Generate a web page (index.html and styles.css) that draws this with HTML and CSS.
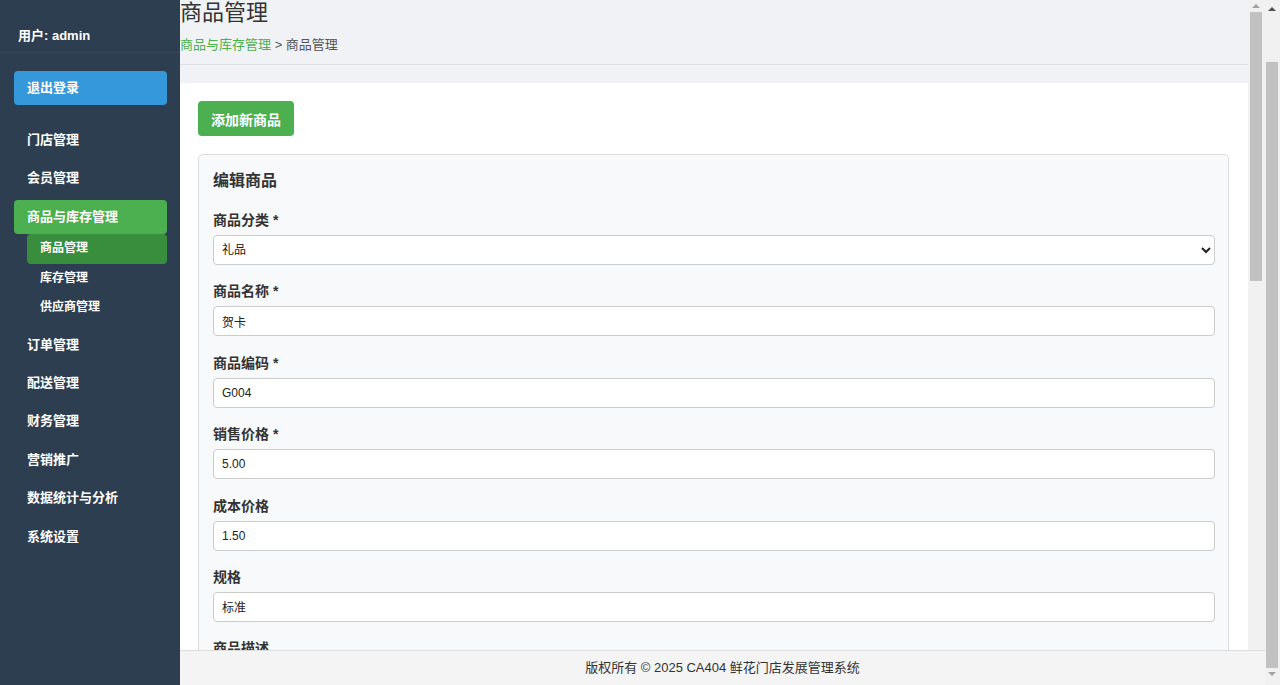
FILE: index.html
```html
<!DOCTYPE html>
<html lang="zh-CN">
<head>
    <meta charset="UTF-8">
    <meta name="viewport" content="width=device-width, initial-scale=1.0">
    <title>商品管理 - 鲜花门店发展管理系统</title>
    <link rel="stylesheet" href="styles.css">
</head>
<body>

    <div class="sidebar">
        <div class="userInfo">用户: admin</div>
        <a class="btnLogout" href="#">退出登录</a>
        <ul class="menu">
            <li><a href="#">门店管理</a></li>
            <li><a href="#">会员管理</a></li>
            <li>
                <a class="active" href="#">商品与库存管理</a>
                <ul class="subMenu">
                    <li><a class="active" href="#">商品管理</a></li>
                    <li><a href="#">库存管理</a></li>
                    <li><a href="#">供应商管理</a></li>
                </ul>
            </li>
            <li><a href="#">订单管理</a></li>
            <li><a href="#">配送管理</a></li>
            <li><a href="#">财务管理</a></li>
            <li><a href="#">营销推广</a></li>
            <li><a href="#">数据统计与分析</a></li>
            <li><a href="#">系统设置</a></li>
        </ul>
    </div>

    <div class="mainArea">
        <div class="contentRow">
            <div class="main">
                <div class="pageHeader">
                    <h1>商品管理</h1>
                    <div class="breadcrumb"><a href="#">商品与库存管理</a> &gt; 商品管理</div>
                </div>

                <div class="panel">
                    <button class="btnGreen">添加新商品</button>

                    <div class="formCard">
                        <h3>编辑商品</h3>
                        <div class="formGroup">
                            <label for="category">商品分类 *</label>
                            <select id="category">
                                <option>鲜花</option>
                                <option>绿植</option>
                                <option selected>礼品</option>
                                <option>包装材料</option>
                            </select>
                        </div>
                        <div class="formGroup">
                            <label for="name">商品名称 *</label>
                            <input type="text" id="name" value="贺卡">
                        </div>
                        <div class="formGroup">
                            <label for="code">商品编码 *</label>
                            <input type="text" id="code" value="G004">
                        </div>
                        <div class="formGroup">
                            <label for="price">销售价格 *</label>
                            <input type="text" id="price" value="5.00">
                        </div>
                        <div class="formGroup">
                            <label for="cost">成本价格</label>
                            <input type="text" id="cost" value="1.50">
                        </div>
                        <div class="formGroup">
                            <label for="spec">规格</label>
                            <input type="text" id="spec" value="标准">
                        </div>
                        <div class="formGroup">
                            <label for="desc">商品描述</label>
                            <textarea id="desc"></textarea>
                        </div>
                    </div>
                </div>
            </div>

            <!-- scrollbar of the content pane -->
            <div class="scrollInner" aria-hidden="true">
                <div class="arrowBox"><span class="arrowUp dim"></span></div>
                <div class="thumbInner"></div>
            </div>
        </div>

        <div class="footer">版权所有 © 2025 CA404 鲜花门店发展管理系统</div>
    </div>

    <!-- page scrollbar -->
    <div class="scrollOuter" aria-hidden="true">
        <div class="arrowBox tall"><span class="arrowUp"></span></div>
        <div class="thumbOuter"></div>
        <div class="arrowBox"><span class="arrowDown dim"></span></div>
    </div>

</body>
</html>
```

FILE: styles.css
```css
*{
    margin: 0px;
    padding: 0px;
    box-sizing: border-box;
}
body {
    font-family: "Liberation Sans", Arial, "Noto Sans CJK SC", sans-serif;
    color: #333;
    background-color: #f0f2f5;
    display: flex;
    height: 100vh;
    overflow: hidden;
}
a {
    text-decoration: none;
}
ul {
    list-style: none;
}
.sidebar {
    width: 180px;
    flex-shrink: 0;
    background-color: #2c3e50;
    color: #fff;
}
.userInfo {
    padding: 26px 18px 7px;
    font-size: 13px;
    font-weight: bold;
    line-height: 19px;
    border-bottom: 1px solid #34495e;
}
.btnLogout {
    display: block;
    margin: 18px 13px 0 14px;
    padding: 8px 13px;
    line-height: 18px;
    font-size: 13px;
    font-weight: bold;
    color: #fff;
    background-color: #3498db;
    border-radius: 4px;
}
.menu {
    margin-top: 18px;
}
.menu > li {
    margin-bottom: 4.4px;
}
.menu > li > a {
    display: block;
    margin: 0 13px 0 14px;
    padding: 8px 13px;
    line-height: 18px;
    font-size: 13px;
    font-weight: bold;
    color: #fff;
    border-radius: 4px;
}
.menu > li > a.active {
    background-color: #4caf50;
}
.subMenu {
    margin: 0 13px 0 27px;
}
.subMenu a {
    display: block;
    padding: 6px 13px;
    line-height: 17.8px;
    font-size: 12px;
    font-weight: bold;
    color: #fff;
    border-radius: 4px;
}
.subMenu a.active {
    background-color: #388e3c;
}
.mainArea {
    flex: 1;
    min-width: 0;
    display: flex;
    flex-direction: column;
}
.contentRow {
    flex: 1;
    min-height: 0;
    display: flex;
}
.main {
    flex: 1;
    min-width: 0;
    overflow: hidden;
    background-color: #f0f2f5;
}
.pageHeader {
    padding-bottom: 10px;
    border-bottom: 1px solid #ddd;
}
.pageHeader h1 {
    font-size: 22px;
    font-weight: normal;
    line-height: 26px;
    color: #333;
}
.breadcrumb {
    margin-top: 10px;
    font-size: 13px;
    line-height: 18px;
    color: #555;
}
.breadcrumb a {
    color: #4caf50;
}
.panel {
    margin-top: 18px;
    padding: 18px 19px 18px 18px;
    background-color: #fff;
}
.btnGreen {
    height: 35px;
    padding: 0 13px;
    font-family: inherit;
    font-size: 14px;
    font-weight: bold;
    color: #fff;
    background-color: #4caf50;
    border: none;
    border-radius: 4px;
}
.formCard {
    margin-top: 18px;
    padding: 15px 13px 15px 14px;
    background-color: #f8f9fa;
    border: 1px solid #ddd;
    border-radius: 5px;
}
.formCard h3 {
    font-size: 16px;
    line-height: 22px;
    font-weight: bold;
    color: #333;
    margin-bottom: 18px;
}
.formGroup {
    margin-bottom: 16.4px;
}
.formGroup label {
    display: block;
    font-size: 14px;
    line-height: 20px;
    font-weight: bold;
    color: #333;
    margin-bottom: 5px;
}
.formGroup input, .formGroup select, .formGroup textarea {
    display: block;
    width: 100%;
    height: 30px;
    padding: 0 8px;
    font-family: inherit;
    font-size: 12px;
    color: #222;
    background-color: #fff;
    border: 1px solid #ccc;
    border-radius: 4px;
}
.formGroup select {
    padding: 0 4px;
}
.formGroup textarea {
    height: 80px;
    padding: 8px;
    resize: vertical;
}
.footer {
    height: 35px;
    flex-shrink: 0;
    line-height: 34px;
    text-align: center;
    font-size: 13px;
    color: #333;
    background-color: #f4f4f4;
    border-top: 1px solid #ddd;
}

/* drawn scrollbars, like the classic browser ones */
.scrollInner, .scrollOuter {
    flex-shrink: 0;
    display: flex;
    flex-direction: column;
    background-color: #f1f1f1;
}
.scrollInner {
    width: 17px;
    padding: 0 3px 0 2px;
}
.scrollOuter {
    width: 15px;
    padding: 0 2px 0 1px;
}
.arrowBox {
    height: 12px;
    display: flex;
    align-items: center;
    justify-content: center;
}
.arrowBox.tall {
    height: 17px;
    margin-bottom: 45px;
}
.arrowUp, .arrowDown {
    width: 0;
    height: 0;
    border-left: 4px solid transparent;
    border-right: 4px solid transparent;
}
.arrowUp {
    border-bottom: 4px solid #505050;
}
.arrowDown {
    border-top: 4px solid #505050;
}
.arrowUp.dim {
    border-bottom-color: #a3a3a3;
}
.arrowDown.dim {
    border-top-color: #a3a3a3;
}
.thumbInner {
    height: 269px;
    background-color: #c1c1c1;
}
.thumbOuter {
    height: 606px;
    background-color: #c1c1c1;
}
```
